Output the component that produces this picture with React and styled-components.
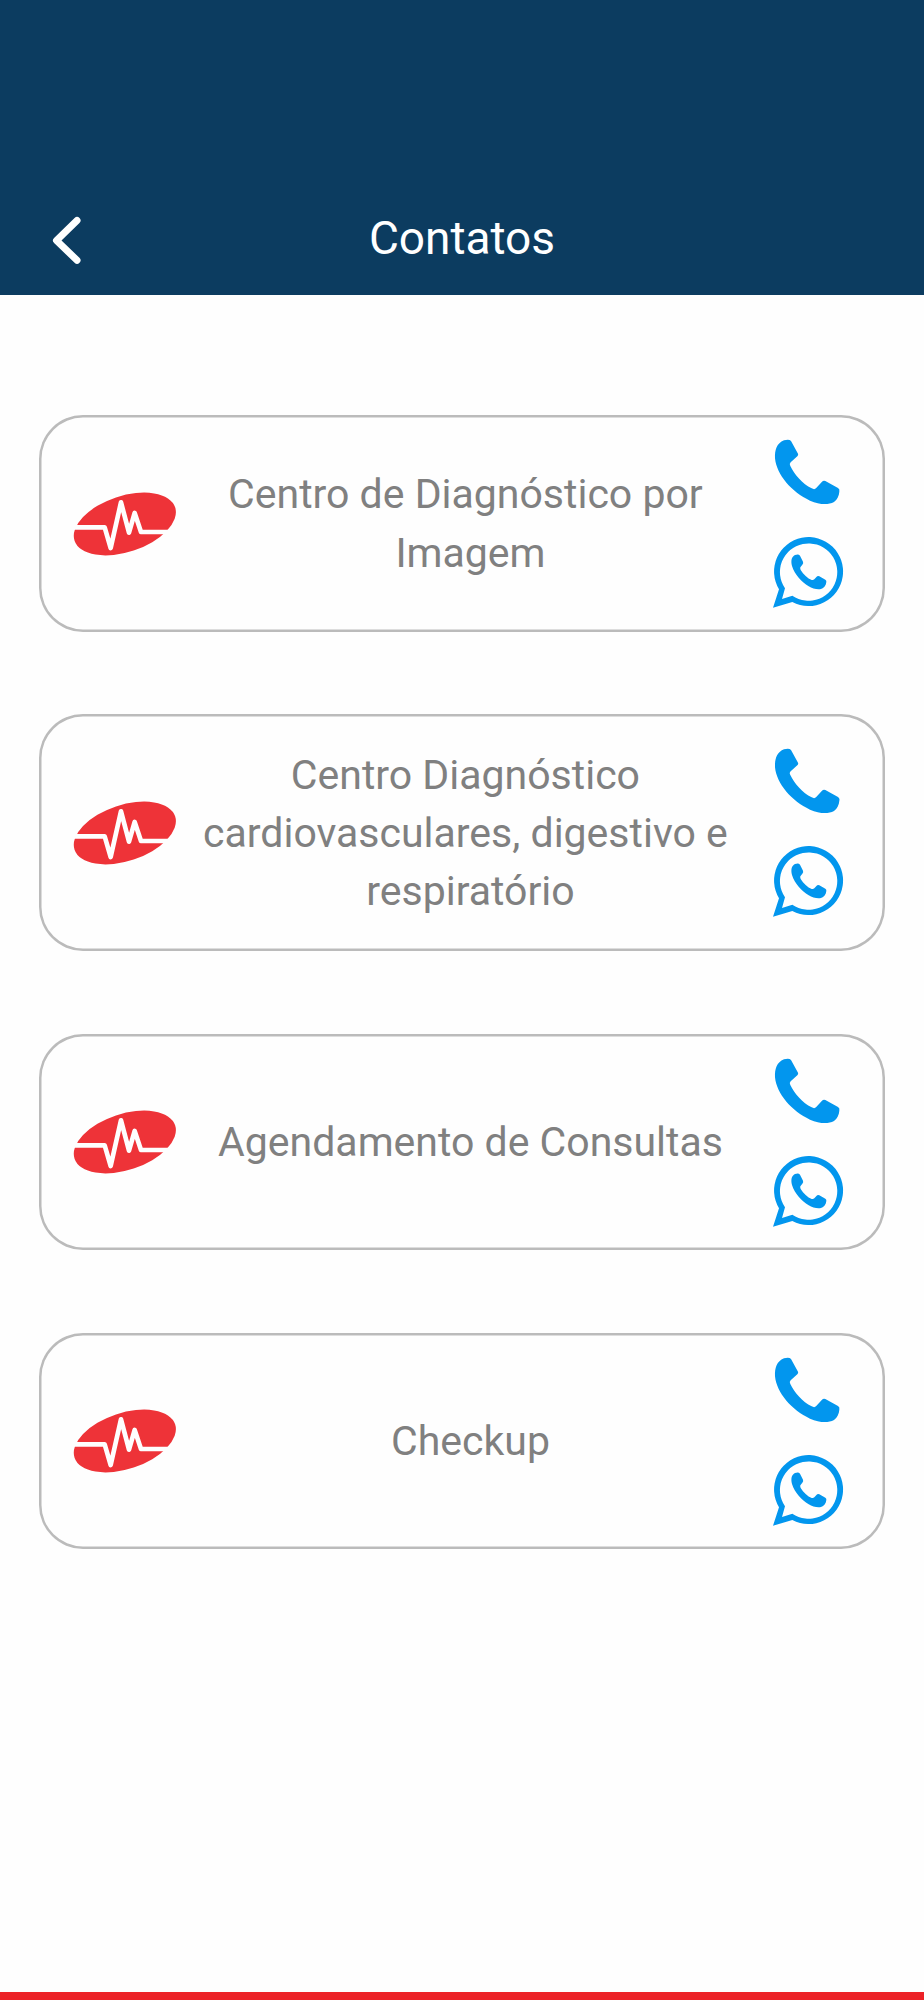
import React from 'react'
import styled, { createGlobalStyle } from 'styled-components'

const GlobalStyle = createGlobalStyle`
  * {
    box-sizing: border-box;
  }

  body {
    margin: 0;
    background: #fefefe;
    font-family: Roboto, sans-serif;
  }
`

const Screen = styled.div`
  display: flex;
  flex-direction: column;
  height: 2000px;
  border-bottom: 8px solid #ec2227;
`

const Header = styled.header`
  display: grid;
  grid-template-columns: 100px 1fr 100px;
  align-items: center;
  height: 294.5px;
  padding: 186px 0 0;
  background: #0c3c60;
`

const BackButton = styled.button`
  display: flex;
  padding: 0;
  margin: 0 0 0 50px;
  border: 0;
  background: none;
`

const Title = styled.h1`
  margin: 0 0 5px;
  color: #fff;
  font-size: 46px;
  font-weight: 400;
  line-height: 56px;
  text-align: center;
`

const ContactList = styled.main`
  display: flex;
  flex-direction: column;
  gap: 82.4px;
  padding: 120.9px 39px 0;
`

const Card = styled.section`
  display: flex;
  align-items: center;
  min-height: 216.6px;
  padding: 19.8px 34px;
  border-radius: 44px;
  background: #fefefe;
  box-shadow: inset 0 0 0 2.5px #bbb;
`

const Name = styled.p`
  flex: none;
  width: 540px;
  margin: 0 29.5px 0 21.5px;
  padding: 11.4px 0;
  color: #808080;
  font-size: 41px;
  line-height: 58.2px;
  text-align: center;
  white-space: break-spaces;
`

const Actions = styled.div`
  display: flex;
  flex-direction: column;
  gap: 25px;
  margin-bottom: 2px;
`

const ActionButton = styled.button`
  display: flex;
  padding: 0;
  border: 0;
  background: none;
  color: #0296ee;
`

const Logo = () => (
  <svg width="106" height="66" viewBox="40 33 318 198">
    <ellipse
      cx="195.5"
      cy="132"
      rx="159"
      ry="84"
      fill="#ee3338"
      transform="rotate(-18.4 195.5 132)"
    />
    <path
      d="M38 142H135L153 204L184 67L208 158L225 99L244 156H335"
      fill="none"
      stroke="#fefefe"
      strokeWidth="14"
      strokeLinejoin="round"
    />
  </svg>
)

const PhoneIcon = () => (
  <svg width="75" height="75" viewBox="30 75 225 225" fill="currentColor">
    <path d="M72 91Q88 87 93 93L114 131Q116 135 112 139L92 157Q87 162 91 168C102 192 128 222 155 235Q163 240 168 235L186 215Q190 211 196 213L234 234Q240 238 238 245C237 258 232 268 222 276C205 285 180 285 150 272C95 246 50 195 45 145C44 120 50 100 72 91Z" />
  </svg>
)

const WhatsappIcon = () => (
  <svg width="75" height="75" viewBox="30 375 225 225" fill="currentColor">
    <path
      fillRule="evenodd"
      d="M39 593L57 538A103.5 103.5 0 1 1 97 576ZM66 567L75 535A86 86 0 1 1 97 557Z"
    />
    <path d="M105 435Q116 431 120 437L129 455Q131 459 127 464L121 472Q120 476 122 480C130 494 143 505 155 510Q160 511 163 508L170 500Q173 497 178 499L196 509Q200 511 199 516C198 527 192 534 183 537C172 539 157 536 146 529C125 516 104 494 96 468C92 452 95 440 105 435Z" />
  </svg>
)

const contacts = [
  'Centro de Diagnóstico por Imagem',
  'Centro Diagnóstico cardiovasculares, digestivo e respiratório',
  'Agendamento de Consultas',
  'Checkup',
]

function App() {
  return (
    <Screen>
      <GlobalStyle />
      <Header>
        <BackButton aria-label="Voltar">
          <svg width="34" height="50" viewBox="0 0 34 50">
            <path
              d="M27 5.500L6.500 25.400L27 45.300"
              fill="none"
              stroke="#fff"
              strokeWidth="7"
              strokeLinecap="round"
              strokeLinejoin="round"
            />
          </svg>
        </BackButton>
        <Title>Contatos</Title>
      </Header>
      <ContactList>
        {contacts.map((name) => (
          <Card key={name}>
            <Logo />
            <Name>{name}</Name>
            <Actions>
              <ActionButton aria-label="Ligar">
                <PhoneIcon />
              </ActionButton>
              <ActionButton aria-label="WhatsApp">
                <WhatsappIcon />
              </ActionButton>
            </Actions>
          </Card>
        ))}
      </ContactList>
    </Screen>
  )
}

export default App
